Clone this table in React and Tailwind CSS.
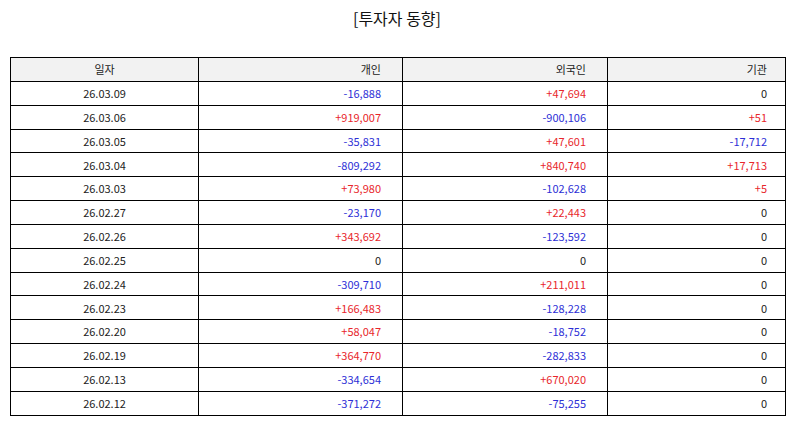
const ROWS = [
  ['26.03.09', '-16,888', '+47,694', '0'],
  ['26.03.06', '+919,007', '-900,106', '+51'],
  ['26.03.05', '-35,831', '+47,601', '-17,712'],
  ['26.03.04', '-809,292', '+840,740', '+17,713'],
  ['26.03.03', '+73,980', '-102,628', '+5'],
  ['26.02.27', '-23,170', '+22,443', '0'],
  ['26.02.26', '+343,692', '-123,592', '0'],
  ['26.02.25', '0', '0', '0'],
  ['26.02.24', '-309,710', '+211,011', '0'],
  ['26.02.23', '+166,483', '-128,228', '0'],
  ['26.02.20', '+58,047', '-18,752', '0'],
  ['26.02.19', '+364,770', '-282,833', '0'],
  ['26.02.13', '-334,654', '+670,020', '0'],
  ['26.02.12', '-371,272', '-75,255', '0'],
];

// sign decides the colour: + red, - blue, 0 plain
function tone(v) {
  if (v.startsWith('+')) return 'text-[#e8262b]';
  if (v.startsWith('-')) return 'text-[#2d2fd6]';
  return 'text-[#222]';
}

export default function App() {
  return (
    <div
      className="w-[794px] h-[425px] bg-white"
      style={{ fontFamily: '"Noto Sans CJK KR", "Noto Sans", sans-serif' }}
    >
      <h1 className="pt-[5px] text-center text-[16px] leading-[26px] text-[#111]">[투자자 동향]</h1>

      <table className="mt-[26px] ml-[10px] w-[775px] border-collapse text-[11px] text-[#222] table-fixed">
        <colgroup>
          <col className="w-[188px]" />
          <col className="w-[204px]" />
          <col className="w-[205px]" />
          <col className="w-[178px]" />
        </colgroup>
        <thead>
          <tr className="h-[23.85px] bg-[#f2f2f2]">
            <th className="p-0 border border-black font-normal text-center">일자</th>
            <th className="p-0 border border-black font-normal text-right pr-[21px]">개인</th>
            <th className="p-0 border border-black font-normal text-right pr-[21px]">외국인</th>
            <th className="p-0 border border-black font-normal text-right pr-[18px]">기관</th>
          </tr>
        </thead>
        <tbody>
          {ROWS.map(([date, a, b, c]) => (
            <tr key={date} className="h-[23.85px]">
              <td className="p-0 border border-black text-center">{date}</td>
              <td className={`p-0 border border-black text-right pr-[21px] ${tone(a)}`}>{a}</td>
              <td className={`p-0 border border-black text-right pr-[21px] ${tone(b)}`}>{b}</td>
              <td className={`p-0 border border-black text-right pr-[18px] ${tone(c)}`}>{c}</td>
            </tr>
          ))}
        </tbody>
      </table>
    </div>
  );
}
